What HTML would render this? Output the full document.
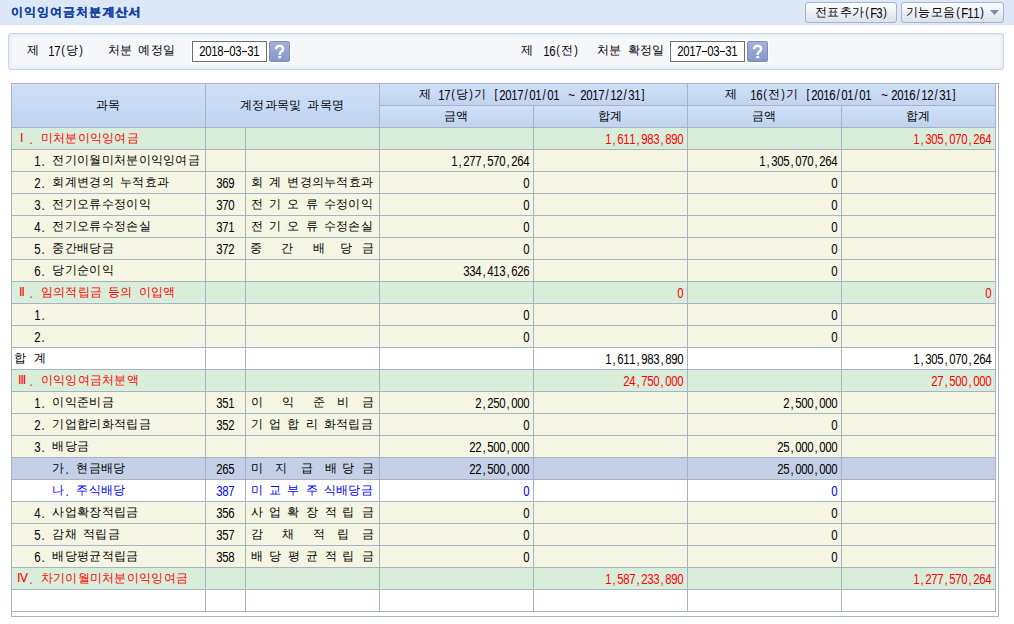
<!DOCTYPE html>
<html><head><meta charset="utf-8"><title>이익잉여금처분계산서</title>
<style>
*{box-sizing:border-box}
html,body{margin:0;padding:0}
body{width:1014px;height:624px;overflow:hidden;background:#fff;position:relative;
 font-family:"Liberation Sans",sans-serif;font-size:12px;color:#000}
.a0{position:absolute}
.t{position:absolute;white-space:nowrap;height:20px;line-height:20px}
.t i{font-style:normal;display:inline-block;vertical-align:top;height:20px;text-align:center}
.t .sp{width:6px}
.t .a.p{transform:translateY(-0.5px) scale(.9,1)}
.t .hy{width:6px;background:linear-gradient(currentColor,currentColor) no-repeat 0.5px 11px/5px 1px}
.t .h{width:12.3px}
.t .a{width:6px;font-family:"Liberation Sans",sans-serif;font-size:12px;transform:translateY(1px) scale(.95,1.17)}
.hdr{position:absolute;left:0;top:0;width:1014px;height:25px;background:#dce8f8}
.title{font-weight:bold;color:#1242a2;text-shadow:0.35px 0 0 #1242a2}
.title .h{width:13.1px}
.btn{position:absolute;top:2px;height:21px;border:1px solid #a7b2c8;border-radius:3px;
 background:linear-gradient(#fbfcfd,#e9edf3 60%,#dde3eb)}
.panel{position:absolute;left:8px;top:33px;width:996px;height:37px;border:1px solid #c6d3e8;border-radius:3px;
 background:#f5f7fb;box-shadow:inset 0 0 4px 1px #e0e6f0}
.inp{position:absolute;top:41px;width:75px;height:21px;border:1px solid #6e6e6e;background:#fff;box-shadow:0 0 0 1px #fff}
.q{position:absolute;top:41px;width:21px;height:21px;border:1px solid #7b8dbf;border-radius:2px;
 background:linear-gradient(#a2b3da,#8497c9);box-shadow:0 0 0 1px #fff}
.q svg{position:absolute;left:-1px;top:-1px}
.tbl{position:absolute;left:11px;top:83px;width:988px;height:534px;border:1px solid #a9b1c5;background:#fff}
.hl{position:absolute;background:#a9b1c5;height:1px}
.vl{position:absolute;background:#a9b1c5;width:1px}
.hc{position:absolute;background:linear-gradient(#cfe0f8,#c0d4ef)}
.bg{position:absolute;height:21px}
.red{color:#ff0000}
.blue{color:#0000ff}
</style></head><body>
<div class="hdr"></div>

<div class="t title" style="left:10.0px;top:2px;"><i class="c h">이</i><i class="c h">익</i><i class="c h">잉</i><i class="c h">여</i><i class="c h">금</i><i class="c h">처</i><i class="c h">분</i><i class="c h">계</i><i class="c h">산</i><i class="c h">서</i></div>
<div class="btn" style="left:805px;width:92px"></div>
<div class="t " style="left:815.0px;top:2px;"><i class="c h">전</i><i class="c h">표</i><i class="c h">추</i><i class="c h">가</i><i class="c a p">(</i><i class="c a">F</i><i class="c a">3</i><i class="c a p">)</i></div>
<div class="btn" style="left:901px;width:103px"></div>
<div class="t " style="left:906.0px;top:2px;"><i class="c h">기</i><i class="c h">능</i><i class="c h">모</i><i class="c h">음</i><i class="c a p">(</i><i class="c a">F</i><i class="c a">1</i><i class="c a">1</i><i class="c a p">)</i></div>
<svg class="a0" style="left:990px;top:10px" width="9" height="5"><path d="M0 0H9L4.5 5Z" fill="#7c88a8"/></svg>
<div class="panel"></div>
<div class="t " style="left:27.0px;top:40px;"><i class="c h">제</i></div>
<div class="t " style="left:47.5px;top:40px;"><i class="c a">1</i><i class="c a">7</i><i class="c a p">(</i><i class="c h">당</i><i class="c a p">)</i></div>
<div class="t " style="left:107.5px;top:40px;"><i class="c h">처</i><i class="c h">분</i><i class="sp"></i><i class="c h">예</i><i class="c h">정</i><i class="c h">일</i></div>
<div class="inp" style="left:192px"></div>
<div class="t " style="left:199.0px;top:40px;"><i class="c a">2</i><i class="c a">0</i><i class="c a">1</i><i class="c a">8</i><i class="hy"></i><i class="c a">0</i><i class="c a">3</i><i class="hy"></i><i class="c a">3</i><i class="c a">1</i></div>
<div class="q" style="left:269px"><svg width="21" height="21"><path d="M7 8.2C7 5.9 8.6 4.9 10.6 4.9C12.6 4.9 14.1 6 14.1 8C14.1 10 12.2 10.6 11.2 11.7C10.8 12.2 10.7 12.7 10.7 13.9" fill="none" stroke="#fff" stroke-width="2.4"/><rect x="9.2" y="15" width="3" height="2.2" fill="#fff"/></svg></div>
<div class="t " style="left:521.0px;top:40px;"><i class="c h">제</i></div>
<div class="t " style="left:542.5px;top:40px;"><i class="c a">1</i><i class="c a">6</i><i class="c a p">(</i><i class="c h">전</i><i class="c a p">)</i></div>
<div class="t " style="left:597.0px;top:40px;"><i class="c h">처</i><i class="c h">분</i><i class="sp"></i><i class="c h">확</i><i class="c h">정</i><i class="c h">일</i></div>
<div class="inp" style="left:670px"></div>
<div class="t " style="left:677.0px;top:40px;"><i class="c a">2</i><i class="c a">0</i><i class="c a">1</i><i class="c a">7</i><i class="hy"></i><i class="c a">0</i><i class="c a">3</i><i class="hy"></i><i class="c a">3</i><i class="c a">1</i></div>
<div class="q" style="left:747px"><svg width="21" height="21"><path d="M7 8.2C7 5.9 8.6 4.9 10.6 4.9C12.6 4.9 14.1 6 14.1 8C14.1 10 12.2 10.6 11.2 11.7C10.8 12.2 10.7 12.7 10.7 13.9" fill="none" stroke="#fff" stroke-width="2.4"/><rect x="9.2" y="15" width="3" height="2.2" fill="#fff"/></svg></div>
<div class="tbl"></div>
<div class="hc" style="left:12px;top:84px;width:193px;height:43px"></div>
<div class="hc" style="left:206px;top:84px;width:173px;height:43px"></div>
<div class="hc" style="left:380px;top:84px;width:307px;height:21px"></div>
<div class="hc" style="left:688px;top:84px;width:307px;height:21px"></div>
<div class="hc" style="left:380px;top:106px;width:153px;height:21px"></div>
<div class="hc" style="left:534px;top:106px;width:153px;height:21px"></div>
<div class="hc" style="left:688px;top:106px;width:153px;height:21px"></div>
<div class="hc" style="left:842px;top:106px;width:153px;height:21px"></div>
<div class="t " style="left:95.7px;top:95px;"><i class="c h">과</i><i class="c h">목</i></div>
<div class="t " style="left:239.8px;top:95px;"><i class="c h">계</i><i class="c h">정</i><i class="c h">과</i><i class="c h">목</i><i class="c h">및</i><i class="sp"></i><i class="c h">과</i><i class="c h">목</i><i class="c h">명</i></div>
<div class="t " style="left:419.0px;top:84px;"><i class="c h">제</i></div>
<div class="t " style="left:438.0px;top:84px;"><i class="c a">1</i><i class="c a">7</i><i class="c a p">(</i><i class="c h">당</i><i class="c a p">)</i><i class="c h">기</i></div>
<div class="t " style="left:493.0px;top:84px;"><i class="c a p">[</i></div>
<div class="t " style="left:498.5px;top:84px;"><i class="c a">2</i><i class="c a">0</i><i class="c a">1</i><i class="c a">7</i><i class="c a">/</i><i class="c a">0</i><i class="c a">1</i><i class="c a">/</i><i class="c a">0</i><i class="c a">1</i></div>
<div class="t " style="left:567.5px;top:84px;"><i class="c a">~</i></div>
<div class="t " style="left:580.0px;top:84px;"><i class="c a">2</i><i class="c a">0</i><i class="c a">1</i><i class="c a">7</i><i class="c a">/</i><i class="c a">1</i><i class="c a">2</i><i class="c a">/</i><i class="c a">3</i><i class="c a">1</i></div>
<div class="t " style="left:640.0px;top:84px;"><i class="c a p">]</i></div>
<div class="t " style="left:724.5px;top:84px;"><i class="c h">제</i></div>
<div class="t " style="left:749.5px;top:84px;"><i class="c a">1</i><i class="c a">6</i><i class="c a p">(</i><i class="c h">전</i><i class="c a p">)</i><i class="c h">기</i></div>
<div class="t " style="left:805.0px;top:84px;"><i class="c a p">[</i></div>
<div class="t " style="left:811.0px;top:84px;"><i class="c a">2</i><i class="c a">0</i><i class="c a">1</i><i class="c a">6</i><i class="c a">/</i><i class="c a">0</i><i class="c a">1</i><i class="c a">/</i><i class="c a">0</i><i class="c a">1</i></div>
<div class="t " style="left:881.0px;top:84px;"><i class="c a">~</i></div>
<div class="t " style="left:891.0px;top:84px;"><i class="c a">2</i><i class="c a">0</i><i class="c a">1</i><i class="c a">6</i><i class="c a">/</i><i class="c a">1</i><i class="c a">2</i><i class="c a">/</i><i class="c a">3</i><i class="c a">1</i></div>
<div class="t " style="left:951.0px;top:84px;"><i class="c a p">]</i></div>
<div class="t " style="left:443.7px;top:106px;"><i class="c h">금</i><i class="c h">액</i></div>
<div class="t " style="left:597.7px;top:106px;"><i class="c h">합</i><i class="c h">계</i></div>
<div class="t " style="left:751.7px;top:106px;"><i class="c h">금</i><i class="c h">액</i></div>
<div class="t " style="left:905.7px;top:106px;"><i class="c h">합</i><i class="c h">계</i></div>
<div class="bg" style="left:12px;top:128px;width:983px;background:#d9eeda"></div>
<div class="t red" style="left:16.2px;top:128px;"><i class="c h">Ⅰ</i><i class="c a">.</i><i class="sp"></i><i class="c h">미</i><i class="c h">처</i><i class="c h">분</i><i class="c h">이</i><i class="c h">익</i><i class="c h">잉</i><i class="c h">여</i><i class="c h">금</i></div>
<div class="t red" style="left:605.0px;top:128px;"><i class="c a">1</i><i class="c a">,</i><i class="c a">6</i><i class="c a">1</i><i class="c a">1</i><i class="c a">,</i><i class="c a">9</i><i class="c a">8</i><i class="c a">3</i><i class="c a">,</i><i class="c a">8</i><i class="c a">9</i><i class="c a">0</i></div>
<div class="t red" style="left:913.0px;top:128px;"><i class="c a">1</i><i class="c a">,</i><i class="c a">3</i><i class="c a">0</i><i class="c a">5</i><i class="c a">,</i><i class="c a">0</i><i class="c a">7</i><i class="c a">0</i><i class="c a">,</i><i class="c a">2</i><i class="c a">6</i><i class="c a">4</i></div>
<div class="bg" style="left:12px;top:150px;width:983px;background:#f5f5e3"></div>
<div class="t " style="left:34.3px;top:150px;"><i class="c a">1</i><i class="c a">.</i><i class="sp"></i><i class="c h">전</i><i class="c h">기</i><i class="c h">이</i><i class="c h">월</i><i class="c h">미</i><i class="c h">처</i><i class="c h">분</i><i class="c h">이</i><i class="c h">익</i><i class="c h">잉</i><i class="c h">여</i><i class="c h">금</i></div>
<div class="t " style="left:451.0px;top:150px;"><i class="c a">1</i><i class="c a">,</i><i class="c a">2</i><i class="c a">7</i><i class="c a">7</i><i class="c a">,</i><i class="c a">5</i><i class="c a">7</i><i class="c a">0</i><i class="c a">,</i><i class="c a">2</i><i class="c a">6</i><i class="c a">4</i></div>
<div class="t " style="left:759.0px;top:150px;"><i class="c a">1</i><i class="c a">,</i><i class="c a">3</i><i class="c a">0</i><i class="c a">5</i><i class="c a">,</i><i class="c a">0</i><i class="c a">7</i><i class="c a">0</i><i class="c a">,</i><i class="c a">2</i><i class="c a">6</i><i class="c a">4</i></div>
<div class="bg" style="left:12px;top:172px;width:983px;background:#f5f5e3"></div>
<div class="t " style="left:34.3px;top:172px;"><i class="c a">2</i><i class="c a">.</i><i class="sp"></i><i class="c h">회</i><i class="c h">계</i><i class="c h">변</i><i class="c h">경</i><i class="c h">의</i><i class="sp"></i><i class="c h">누</i><i class="c h">적</i><i class="c h">효</i><i class="c h">과</i></div>
<div class="t " style="left:216.0px;top:172px;"><i class="c a">3</i><i class="c a">6</i><i class="c a">9</i></div>
<div class="t " style="left:250.5px;top:172px;"><i class="c h">회</i><i class="sp"></i><i class="c h">계</i><i class="sp"></i><i class="c h">변</i><i class="c h">경</i><i class="c h">의</i><i class="c h">누</i><i class="c h">적</i><i class="c h">효</i><i class="c h">과</i></div>
<div class="t " style="left:523.0px;top:172px;"><i class="c a">0</i></div>
<div class="t " style="left:831.0px;top:172px;"><i class="c a">0</i></div>
<div class="bg" style="left:12px;top:194px;width:983px;background:#f5f5e3"></div>
<div class="t " style="left:34.3px;top:194px;"><i class="c a">3</i><i class="c a">.</i><i class="sp"></i><i class="c h">전</i><i class="c h">기</i><i class="c h">오</i><i class="c h">류</i><i class="c h">수</i><i class="c h">정</i><i class="c h">이</i><i class="c h">익</i></div>
<div class="t " style="left:216.0px;top:194px;"><i class="c a">3</i><i class="c a">7</i><i class="c a">0</i></div>
<div class="t " style="left:250.5px;top:194px;"><i class="c h">전</i><i class="sp"></i><i class="c h">기</i><i class="sp"></i><i class="c h">오</i><i class="sp"></i><i class="c h">류</i><i class="sp"></i><i class="c h">수</i><i class="c h">정</i><i class="c h">이</i><i class="c h">익</i></div>
<div class="t " style="left:523.0px;top:194px;"><i class="c a">0</i></div>
<div class="t " style="left:831.0px;top:194px;"><i class="c a">0</i></div>
<div class="bg" style="left:12px;top:216px;width:983px;background:#f5f5e3"></div>
<div class="t " style="left:34.3px;top:216px;"><i class="c a">4</i><i class="c a">.</i><i class="sp"></i><i class="c h">전</i><i class="c h">기</i><i class="c h">오</i><i class="c h">류</i><i class="c h">수</i><i class="c h">정</i><i class="c h">손</i><i class="c h">실</i></div>
<div class="t " style="left:216.0px;top:216px;"><i class="c a">3</i><i class="c a">7</i><i class="c a">1</i></div>
<div class="t " style="left:250.5px;top:216px;"><i class="c h">전</i><i class="sp"></i><i class="c h">기</i><i class="sp"></i><i class="c h">오</i><i class="sp"></i><i class="c h">류</i><i class="sp"></i><i class="c h">수</i><i class="c h">정</i><i class="c h">손</i><i class="c h">실</i></div>
<div class="t " style="left:523.0px;top:216px;"><i class="c a">0</i></div>
<div class="t " style="left:831.0px;top:216px;"><i class="c a">0</i></div>
<div class="bg" style="left:12px;top:238px;width:983px;background:#f5f5e3"></div>
<div class="t " style="left:34.3px;top:238px;"><i class="c a">5</i><i class="c a">.</i><i class="sp"></i><i class="c h">중</i><i class="c h">간</i><i class="c h">배</i><i class="c h">당</i><i class="c h">금</i></div>
<div class="t " style="left:216.0px;top:238px;"><i class="c a">3</i><i class="c a">7</i><i class="c a">2</i></div>
<div class="t " style="left:250.3px;top:238px;"><i class="c h">중</i></div>
<div class="t " style="left:280.8px;top:238px;"><i class="c h">간</i></div>
<div class="t " style="left:312.7px;top:238px;"><i class="c h">배</i></div>
<div class="t " style="left:340.3px;top:238px;"><i class="c h">당</i></div>
<div class="t " style="left:361.9px;top:238px;"><i class="c h">금</i></div>
<div class="t " style="left:523.0px;top:238px;"><i class="c a">0</i></div>
<div class="t " style="left:831.0px;top:238px;"><i class="c a">0</i></div>
<div class="bg" style="left:12px;top:260px;width:983px;background:#f5f5e3"></div>
<div class="t " style="left:34.3px;top:260px;"><i class="c a">6</i><i class="c a">.</i><i class="sp"></i><i class="c h">당</i><i class="c h">기</i><i class="c h">순</i><i class="c h">이</i><i class="c h">익</i></div>
<div class="t " style="left:463.0px;top:260px;"><i class="c a">3</i><i class="c a">3</i><i class="c a">4</i><i class="c a">,</i><i class="c a">4</i><i class="c a">1</i><i class="c a">3</i><i class="c a">,</i><i class="c a">6</i><i class="c a">2</i><i class="c a">6</i></div>
<div class="t " style="left:831.0px;top:260px;"><i class="c a">0</i></div>
<div class="bg" style="left:12px;top:282px;width:983px;background:#d9eeda"></div>
<div class="t red" style="left:16.2px;top:282px;"><i class="c h">Ⅱ</i><i class="c a">.</i><i class="sp"></i><i class="c h">임</i><i class="c h">의</i><i class="c h">적</i><i class="c h">립</i><i class="c h">금</i><i class="sp"></i><i class="c h">등</i><i class="c h">의</i><i class="sp"></i><i class="c h">이</i><i class="c h">입</i><i class="c h">액</i></div>
<div class="t red" style="left:677.0px;top:282px;"><i class="c a">0</i></div>
<div class="t red" style="left:985.0px;top:282px;"><i class="c a">0</i></div>
<div class="bg" style="left:12px;top:304px;width:983px;background:#f5f5e3"></div>
<div class="t " style="left:34.3px;top:304px;"><i class="c a">1</i><i class="c a">.</i></div>
<div class="t " style="left:523.0px;top:304px;"><i class="c a">0</i></div>
<div class="t " style="left:831.0px;top:304px;"><i class="c a">0</i></div>
<div class="bg" style="left:12px;top:326px;width:983px;background:#f5f5e3"></div>
<div class="t " style="left:34.3px;top:326px;"><i class="c a">2</i><i class="c a">.</i></div>
<div class="t " style="left:523.0px;top:326px;"><i class="c a">0</i></div>
<div class="t " style="left:831.0px;top:326px;"><i class="c a">0</i></div>
<div class="bg" style="left:12px;top:348px;width:983px;background:#ffffff"></div>
<div class="t " style="left:14.0px;top:348px;"><i class="c h">합</i></div>
<div class="t " style="left:33.5px;top:348px;"><i class="c h">계</i></div>
<div class="t " style="left:605.0px;top:348px;"><i class="c a">1</i><i class="c a">,</i><i class="c a">6</i><i class="c a">1</i><i class="c a">1</i><i class="c a">,</i><i class="c a">9</i><i class="c a">8</i><i class="c a">3</i><i class="c a">,</i><i class="c a">8</i><i class="c a">9</i><i class="c a">0</i></div>
<div class="t " style="left:913.0px;top:348px;"><i class="c a">1</i><i class="c a">,</i><i class="c a">3</i><i class="c a">0</i><i class="c a">5</i><i class="c a">,</i><i class="c a">0</i><i class="c a">7</i><i class="c a">0</i><i class="c a">,</i><i class="c a">2</i><i class="c a">6</i><i class="c a">4</i></div>
<div class="bg" style="left:12px;top:370px;width:983px;background:#d9eeda"></div>
<div class="t red" style="left:16.2px;top:370px;"><i class="c h">Ⅲ</i><i class="c a">.</i><i class="sp"></i><i class="c h">이</i><i class="c h">익</i><i class="c h">잉</i><i class="c h">여</i><i class="c h">금</i><i class="c h">처</i><i class="c h">분</i><i class="c h">액</i></div>
<div class="t red" style="left:623.0px;top:370px;"><i class="c a">2</i><i class="c a">4</i><i class="c a">,</i><i class="c a">7</i><i class="c a">5</i><i class="c a">0</i><i class="c a">,</i><i class="c a">0</i><i class="c a">0</i><i class="c a">0</i></div>
<div class="t red" style="left:931.0px;top:370px;"><i class="c a">2</i><i class="c a">7</i><i class="c a">,</i><i class="c a">5</i><i class="c a">0</i><i class="c a">0</i><i class="c a">,</i><i class="c a">0</i><i class="c a">0</i><i class="c a">0</i></div>
<div class="bg" style="left:12px;top:392px;width:983px;background:#f5f5e3"></div>
<div class="t " style="left:34.3px;top:392px;"><i class="c a">1</i><i class="c a">.</i><i class="sp"></i><i class="c h">이</i><i class="c h">익</i><i class="c h">준</i><i class="c h">비</i><i class="c h">금</i></div>
<div class="t " style="left:216.0px;top:392px;"><i class="c a">3</i><i class="c a">5</i><i class="c a">1</i></div>
<div class="t " style="left:250.6px;top:392px;"><i class="c h">이</i></div>
<div class="t " style="left:281.7px;top:392px;"><i class="c h">익</i></div>
<div class="t " style="left:312.7px;top:392px;"><i class="c h">준</i></div>
<div class="t " style="left:336.9px;top:392px;"><i class="c h">비</i></div>
<div class="t " style="left:361.9px;top:392px;"><i class="c h">금</i></div>
<div class="t " style="left:475.0px;top:392px;"><i class="c a">2</i><i class="c a">,</i><i class="c a">2</i><i class="c a">5</i><i class="c a">0</i><i class="c a">,</i><i class="c a">0</i><i class="c a">0</i><i class="c a">0</i></div>
<div class="t " style="left:783.0px;top:392px;"><i class="c a">2</i><i class="c a">,</i><i class="c a">5</i><i class="c a">0</i><i class="c a">0</i><i class="c a">,</i><i class="c a">0</i><i class="c a">0</i><i class="c a">0</i></div>
<div class="bg" style="left:12px;top:414px;width:983px;background:#f5f5e3"></div>
<div class="t " style="left:34.3px;top:414px;"><i class="c a">2</i><i class="c a">.</i><i class="sp"></i><i class="c h">기</i><i class="c h">업</i><i class="c h">합</i><i class="c h">리</i><i class="c h">화</i><i class="c h">적</i><i class="c h">립</i><i class="c h">금</i></div>
<div class="t " style="left:216.0px;top:414px;"><i class="c a">3</i><i class="c a">5</i><i class="c a">2</i></div>
<div class="t " style="left:250.5px;top:414px;"><i class="c h">기</i><i class="sp"></i><i class="c h">업</i><i class="sp"></i><i class="c h">합</i><i class="sp"></i><i class="c h">리</i><i class="sp"></i><i class="c h">화</i><i class="c h">적</i><i class="c h">립</i><i class="c h">금</i></div>
<div class="t " style="left:523.0px;top:414px;"><i class="c a">0</i></div>
<div class="t " style="left:831.0px;top:414px;"><i class="c a">0</i></div>
<div class="bg" style="left:12px;top:436px;width:983px;background:#f5f5e3"></div>
<div class="t " style="left:34.3px;top:436px;"><i class="c a">3</i><i class="c a">.</i><i class="sp"></i><i class="c h">배</i><i class="c h">당</i><i class="c h">금</i></div>
<div class="t " style="left:469.0px;top:436px;"><i class="c a">2</i><i class="c a">2</i><i class="c a">,</i><i class="c a">5</i><i class="c a">0</i><i class="c a">0</i><i class="c a">,</i><i class="c a">0</i><i class="c a">0</i><i class="c a">0</i></div>
<div class="t " style="left:777.0px;top:436px;"><i class="c a">2</i><i class="c a">5</i><i class="c a">,</i><i class="c a">0</i><i class="c a">0</i><i class="c a">0</i><i class="c a">,</i><i class="c a">0</i><i class="c a">0</i><i class="c a">0</i></div>
<div class="bg" style="left:12px;top:458px;width:983px;background:#c4d0e8"></div>
<div class="t " style="left:52.0px;top:458px;"><i class="c h">가</i><i class="c a">.</i><i class="sp"></i><i class="c h">현</i><i class="c h">금</i><i class="c h">배</i><i class="c h">당</i></div>
<div class="t " style="left:216.0px;top:458px;"><i class="c a">2</i><i class="c a">6</i><i class="c a">5</i></div>
<div class="t " style="left:250.6px;top:458px;"><i class="c h">미</i></div>
<div class="t " style="left:274.8px;top:458px;"><i class="c h">지</i></div>
<div class="t " style="left:300.6px;top:458px;"><i class="c h">급</i></div>
<div class="t " style="left:324.8px;top:458px;"><i class="c h">배</i></div>
<div class="t " style="left:342.0px;top:458px;"><i class="c h">당</i></div>
<div class="t " style="left:361.9px;top:458px;"><i class="c h">금</i></div>
<div class="t " style="left:469.0px;top:458px;"><i class="c a">2</i><i class="c a">2</i><i class="c a">,</i><i class="c a">5</i><i class="c a">0</i><i class="c a">0</i><i class="c a">,</i><i class="c a">0</i><i class="c a">0</i><i class="c a">0</i></div>
<div class="t " style="left:777.0px;top:458px;"><i class="c a">2</i><i class="c a">5</i><i class="c a">,</i><i class="c a">0</i><i class="c a">0</i><i class="c a">0</i><i class="c a">,</i><i class="c a">0</i><i class="c a">0</i><i class="c a">0</i></div>
<div class="bg" style="left:12px;top:480px;width:983px;background:#ffffff"></div>
<div class="t blue" style="left:52.0px;top:480px;"><i class="c h">나</i><i class="c a">.</i><i class="sp"></i><i class="c h">주</i><i class="c h">식</i><i class="c h">배</i><i class="c h">당</i></div>
<div class="t blue" style="left:216.0px;top:480px;"><i class="c a">3</i><i class="c a">8</i><i class="c a">7</i></div>
<div class="t blue" style="left:250.5px;top:480px;"><i class="c h">미</i><i class="sp"></i><i class="c h">교</i><i class="sp"></i><i class="c h">부</i><i class="sp"></i><i class="c h">주</i><i class="sp"></i><i class="c h">식</i><i class="c h">배</i><i class="c h">당</i><i class="c h">금</i></div>
<div class="t blue" style="left:523.0px;top:480px;"><i class="c a">0</i></div>
<div class="t blue" style="left:831.0px;top:480px;"><i class="c a">0</i></div>
<div class="bg" style="left:12px;top:502px;width:983px;background:#f5f5e3"></div>
<div class="t " style="left:34.3px;top:502px;"><i class="c a">4</i><i class="c a">.</i><i class="sp"></i><i class="c h">사</i><i class="c h">업</i><i class="c h">확</i><i class="c h">장</i><i class="c h">적</i><i class="c h">립</i><i class="c h">금</i></div>
<div class="t " style="left:216.0px;top:502px;"><i class="c a">3</i><i class="c a">5</i><i class="c a">6</i></div>
<div class="t " style="left:250.6px;top:502px;"><i class="c h">사</i></div>
<div class="t " style="left:268.7px;top:502px;"><i class="c h">업</i></div>
<div class="t " style="left:286.8px;top:502px;"><i class="c h">확</i></div>
<div class="t " style="left:305.8px;top:502px;"><i class="c h">장</i></div>
<div class="t " style="left:324.8px;top:502px;"><i class="c h">적</i></div>
<div class="t " style="left:342.0px;top:502px;"><i class="c h">립</i></div>
<div class="t " style="left:361.9px;top:502px;"><i class="c h">금</i></div>
<div class="t " style="left:523.0px;top:502px;"><i class="c a">0</i></div>
<div class="t " style="left:831.0px;top:502px;"><i class="c a">0</i></div>
<div class="bg" style="left:12px;top:524px;width:983px;background:#f5f5e3"></div>
<div class="t " style="left:34.3px;top:524px;"><i class="c a">5</i><i class="c a">.</i><i class="sp"></i><i class="c h">감</i><i class="c h">채</i><i class="sp"></i><i class="c h">적</i><i class="c h">립</i><i class="c h">금</i></div>
<div class="t " style="left:216.0px;top:524px;"><i class="c a">3</i><i class="c a">5</i><i class="c a">7</i></div>
<div class="t " style="left:250.6px;top:524px;"><i class="c h">감</i></div>
<div class="t " style="left:281.7px;top:524px;"><i class="c h">채</i></div>
<div class="t " style="left:312.7px;top:524px;"><i class="c h">적</i></div>
<div class="t " style="left:336.9px;top:524px;"><i class="c h">립</i></div>
<div class="t " style="left:361.9px;top:524px;"><i class="c h">금</i></div>
<div class="t " style="left:523.0px;top:524px;"><i class="c a">0</i></div>
<div class="t " style="left:831.0px;top:524px;"><i class="c a">0</i></div>
<div class="bg" style="left:12px;top:546px;width:983px;background:#f5f5e3"></div>
<div class="t " style="left:34.3px;top:546px;"><i class="c a">6</i><i class="c a">.</i><i class="sp"></i><i class="c h">배</i><i class="c h">당</i><i class="c h">평</i><i class="c h">균</i><i class="c h">적</i><i class="c h">립</i><i class="c h">금</i></div>
<div class="t " style="left:216.0px;top:546px;"><i class="c a">3</i><i class="c a">5</i><i class="c a">8</i></div>
<div class="t " style="left:250.6px;top:546px;"><i class="c h">배</i></div>
<div class="t " style="left:268.7px;top:546px;"><i class="c h">당</i></div>
<div class="t " style="left:287.7px;top:546px;"><i class="c h">평</i></div>
<div class="t " style="left:305.8px;top:546px;"><i class="c h">균</i></div>
<div class="t " style="left:324.8px;top:546px;"><i class="c h">적</i></div>
<div class="t " style="left:342.0px;top:546px;"><i class="c h">립</i></div>
<div class="t " style="left:361.9px;top:546px;"><i class="c h">금</i></div>
<div class="t " style="left:523.0px;top:546px;"><i class="c a">0</i></div>
<div class="t " style="left:831.0px;top:546px;"><i class="c a">0</i></div>
<div class="bg" style="left:12px;top:568px;width:983px;background:#d9eeda"></div>
<div class="t red" style="left:16.2px;top:568px;"><i class="c h">Ⅳ</i><i class="c a">.</i><i class="sp"></i><i class="c h">차</i><i class="c h">기</i><i class="c h">이</i><i class="c h">월</i><i class="c h">미</i><i class="c h">처</i><i class="c h">분</i><i class="c h">이</i><i class="c h">익</i><i class="c h">잉</i><i class="c h">여</i><i class="c h">금</i></div>
<div class="t red" style="left:605.0px;top:568px;"><i class="c a">1</i><i class="c a">,</i><i class="c a">5</i><i class="c a">8</i><i class="c a">7</i><i class="c a">,</i><i class="c a">2</i><i class="c a">3</i><i class="c a">3</i><i class="c a">,</i><i class="c a">8</i><i class="c a">9</i><i class="c a">0</i></div>
<div class="t red" style="left:913.0px;top:568px;"><i class="c a">1</i><i class="c a">,</i><i class="c a">2</i><i class="c a">7</i><i class="c a">7</i><i class="c a">,</i><i class="c a">5</i><i class="c a">7</i><i class="c a">0</i><i class="c a">,</i><i class="c a">2</i><i class="c a">6</i><i class="c a">4</i></div>
<div class="bg" style="left:12px;top:590px;width:983px;background:#ffffff"></div>
<div class="vl" style="left:11px;top:83px;height:529px"></div>
<div class="vl" style="left:205px;top:83px;height:529px"></div>
<div class="vl" style="left:245px;top:127px;height:485px"></div>
<div class="vl" style="left:379px;top:83px;height:529px"></div>
<div class="vl" style="left:533px;top:105px;height:507px"></div>
<div class="vl" style="left:687px;top:83px;height:529px"></div>
<div class="vl" style="left:841px;top:105px;height:507px"></div>
<div class="vl" style="left:995px;top:83px;height:529px"></div>
<div class="hl" style="left:379px;top:105px;width:617px"></div>
<div class="hl" style="left:11px;top:127px;width:985px"></div>
<div class="hl" style="left:11px;top:149px;width:985px"></div>
<div class="hl" style="left:11px;top:171px;width:985px"></div>
<div class="hl" style="left:11px;top:193px;width:985px"></div>
<div class="hl" style="left:11px;top:215px;width:985px"></div>
<div class="hl" style="left:11px;top:237px;width:985px"></div>
<div class="hl" style="left:11px;top:259px;width:985px"></div>
<div class="hl" style="left:11px;top:281px;width:985px"></div>
<div class="hl" style="left:11px;top:303px;width:985px"></div>
<div class="hl" style="left:11px;top:325px;width:985px"></div>
<div class="hl" style="left:11px;top:347px;width:985px"></div>
<div class="hl" style="left:11px;top:369px;width:985px"></div>
<div class="hl" style="left:11px;top:391px;width:985px"></div>
<div class="hl" style="left:11px;top:413px;width:985px"></div>
<div class="hl" style="left:11px;top:435px;width:985px"></div>
<div class="hl" style="left:11px;top:457px;width:985px"></div>
<div class="hl" style="left:11px;top:479px;width:985px"></div>
<div class="hl" style="left:11px;top:501px;width:985px"></div>
<div class="hl" style="left:11px;top:523px;width:985px"></div>
<div class="hl" style="left:11px;top:545px;width:985px"></div>
<div class="hl" style="left:11px;top:567px;width:985px"></div>
<div class="hl" style="left:11px;top:589px;width:985px"></div>
<div class="hl" style="left:11px;top:611px;width:985px"></div>
<div class="hl" style="left:11px;top:83px;width:988px"></div>
</body></html>
